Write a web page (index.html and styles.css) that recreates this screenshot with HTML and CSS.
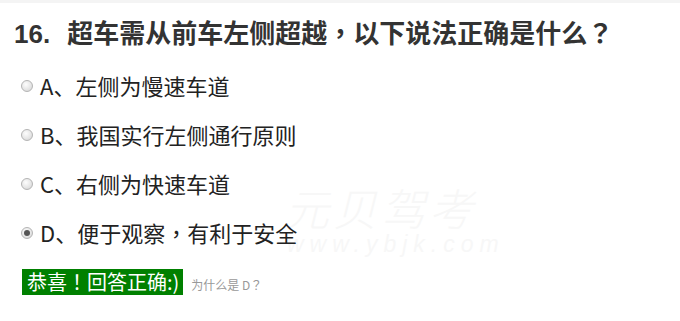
FILE: index.html
```html
<!DOCTYPE html>
<html lang="zh-CN">
<head>
<meta charset="utf-8">
<title>16. 超车需从前车左侧超越</title>
<link rel="stylesheet" href="styles.css">
</head>
<body>
<div class="topbar"></div>
<div class="question">
  <div class="watermark">
    <div class="wm-cn">元贝驾考</div>
    <div class="wm-en">www.ybjk.com</div>
  </div>
  <h1 class="title"><span class="num">16.</span><span class="qtext">超车需从前车左侧超越<span class="p" lang="zh-TW">，</span>以下说法正确是什么<span class="p" lang="zh-TW">？</span></span></h1>
  <ul class="options">
    <li class="option"><span class="radio"></span><span class="label">A、左侧为慢速车道</span></li>
    <li class="option"><span class="radio"></span><span class="label">B、我国实行左侧通行原则</span></li>
    <li class="option"><span class="radio"></span><span class="label">C、右侧为快速车道</span></li>
    <li class="option"><span class="radio checked"></span><span class="label">D、便于观察<span class="p" lang="zh-TW">，</span>有利于安全</span></li>
  </ul>
  <div class="result">
    <span class="correct">恭喜<span class="p" lang="zh-TW">！</span>回答正确:)</span>
    <span class="why">为什么是 D<span class="p" lang="zh-TW">？</span></span>
  </div>
</div>
</body>
</html>
```
FILE: styles.css
```css
html, body {
  margin: 0;
  padding: 0;
  background: #fff;
}
body {
  width: 680px;
  height: 321px;
  overflow: hidden;
  font-family: "Noto Sans CJK SC", sans-serif;
  color: #222;
}
.topbar {
  height: 3px;
  background: #f4f4f4;
}
.question {
  position: relative;
  z-index: 0;
}
.title {
  position: relative;
  margin: 11px 0 0 14px;
  font-size: 26px;
  font-weight: bold;
  line-height: 36px;
  color: #333;
  white-space: nowrap;
}
.num {
  font-family: "Liberation Sans", sans-serif;
  margin-right: 17px;
}
.qtext {
  font-family: "Noto Sans CJK SC", sans-serif;
}
.p {
  font-family: "Noto Sans CJK TC", "Noto Sans CJK SC", sans-serif;
}
.options {
  position: relative;
  list-style: none;
  margin: 8px 0 0 0;
  padding: 0;
}
.option {
  display: flex;
  align-items: center;
  height: 49px;
  padding-left: 21px;
  font-size: 22px;
  color: #222;
  white-space: nowrap;
}
.radio {
  width: 10px;
  height: 10px;
  border: 1px solid #b4b4b4;
  border-radius: 50%;
  background: radial-gradient(circle at 40% 35%, #fdfdfd 0%, #e4e4e4 60%, #cfcfcf 100%);
  margin: 2px 7px 0 0;
  flex: none;
  position: relative;
}
.radio.checked::after {
  content: "";
  position: absolute;
  left: 2px;
  top: 2px;
  width: 6px;
  height: 6px;
  border-radius: 50%;
  background: #555;
}
.result {
  position: relative;
  display: flex;
  align-items: center;
  margin: 13px 0 0 22px;
}
.correct {
  background: #008000;
  color: #fff;
  font-size: 20px;
  line-height: 26px;
  height: 26px;
  padding: 0 4px 0 5px;
  white-space: nowrap;
}
.why {
  margin-left: 8px;
  margin-top: 5px;
  font-size: 12px;
  color: #999;
}
.watermark {
  position: absolute;
  left: 285px;
  top: 168px;
  color: #f7f7f7;
  font-style: italic;
  pointer-events: none;
}
.wm-cn {
  font-size: 44px;
  font-weight: 300;
  line-height: 50px;
  letter-spacing: 4px;
}
.wm-en {
  font-family: "Liberation Sans", sans-serif;
  font-size: 23px;
  line-height: 24px;
  letter-spacing: 6px;
  margin-left: 2px;
}
```
